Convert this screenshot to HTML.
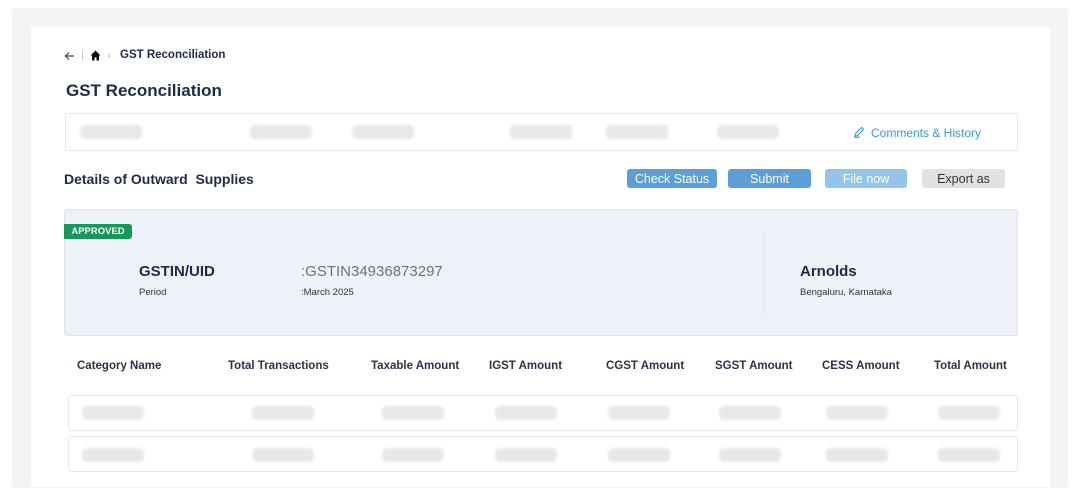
<!DOCTYPE html>
<html><head><meta charset="utf-8"><style>
*{margin:0;padding:0;box-sizing:border-box}
body{width:1080px;height:479px;overflow:hidden;background:#fff;font-family:"Liberation Sans",sans-serif;position:relative;color:#1f2a4a}
.a{position:absolute}
.ph{position:absolute;height:14px;width:62px;background:#e8e8e8;border-radius:5px;filter:blur(1.2px)}
.btn{position:absolute;top:169px;height:19px;border-radius:3px;font-size:12.5px;text-align:center;line-height:20px}
.th{position:absolute;top:360px;font-size:11.5px;font-weight:bold;color:#2d3345}
.row{position:absolute;left:68px;width:950px;height:36px;border:1px solid #e6e8ec;border-radius:3px;background:#fff}
</style></head><body>
<div class="a" style="left:12px;top:8px;width:1056px;height:480px;background:#f4f4f5;border-radius:4px"></div>
<div class="a" style="left:31px;top:27px;width:1019px;height:460px;background:#fff"></div>

<svg class="a" style="left:64px;top:51px" width="11" height="10" viewBox="0 0 11 10"><path d="M10 5H1.5M5 1.5L1.5 5L5 8.5" fill="none" stroke="#444" stroke-width="1.2"/></svg>
<div class="a" style="left:82px;top:50px;width:1px;height:11px;background:#ccc"></div>
<svg class="a" style="left:90px;top:50px" width="11" height="11" viewBox="0 0 11 11"><path d="M5.5 0.5L0.5 5.5H2V10.5H4.5V7.5H6.5V10.5H9V5.5H10.5Z" fill="#111"/></svg>
<div class="a" style="left:107px;top:48px;font-size:12px;color:#bbb">&#8250;</div>
<div class="a" style="left:120px;top:49px;font-size:11.5px;font-weight:bold;color:#1f2a4a">GST Reconciliation</div>
<div class="a" style="left:66px;top:81px;font-size:17px;font-weight:bold;color:#1f2a4a">GST Reconciliation</div>

<div class="a" style="left:65px;top:113px;width:953px;height:38px;border:1px solid #e8e8ea;border-radius:2px"></div>
<div class="ph" style="left:80px;top:125px"></div>
<div class="ph" style="left:250px;top:125px"></div>
<div class="ph" style="left:352px;top:125px"></div>
<div class="ph" style="left:510px;top:125px"></div>
<div class="ph" style="left:606px;top:125px"></div>
<div class="ph" style="left:717px;top:125px"></div>
<svg class="a" style="left:853px;top:126px" width="12" height="12" viewBox="0 0 12 12"><path d="M2 10L2.5 7.5L8.5 1.5L10.5 3.5L4.5 9.5Z M1 11.2H7" fill="none" stroke="#3a9bd5" stroke-width="1.1"/></svg>
<div class="a" style="left:871px;top:126px;font-size:12px;color:#3a9bd5">Comments &amp; History</div>

<div class="a" style="left:64px;top:171px;font-size:14px;font-weight:bold;color:#1f2a4a">Details of Outward&nbsp; Supplies</div>
<div class="btn" style="left:627px;width:90px;background:#5b9ed8;color:#fff">Check Status</div>
<div class="btn" style="left:728px;width:83px;background:#5b9ed8;color:#fff">Submit</div>
<div class="btn" style="left:825px;width:82px;background:#94c4ea;color:#fff">File now</div>
<div class="btn" style="left:922px;width:83px;background:#e2e2e2;color:#333">Export as</div>

<div class="a" style="left:64px;top:209px;width:954px;height:127px;background:#eef1f8;border:1px solid #dfe3ea;border-radius:3px"></div>
<div class="a" style="left:64px;top:224px;width:68px;height:15px;background:#13995a;border-radius:0 3px 3px 0;color:#fff;font-size:9.5px;line-height:15px;text-align:center;font-weight:bold">APPROVED</div>
<div class="a" style="left:764px;top:230px;width:1px;height:85px;background:#dfe3ea"></div>
<div class="a" style="left:139px;top:263px;font-size:15px;font-weight:bold;color:#1f2a4a">GSTIN/UID</div>
<div class="a" style="left:139px;top:287px;font-size:9.5px;color:#333">Period</div>
<div class="a" style="left:301px;top:263px;font-size:15px;color:#6b7280">:GSTIN34936873297</div>
<div class="a" style="left:301px;top:287px;font-size:9.5px;color:#333">:March 2025</div>
<div class="a" style="left:800px;top:263px;font-size:15px;font-weight:bold;color:#1f2a4a">Arnolds</div>
<div class="a" style="left:800px;top:287px;font-size:9.5px;color:#333">Bengaluru, Karnataka</div>

<div class="th" style="left:77px">Category Name</div>
<div class="th" style="left:228px">Total Transactions</div>
<div class="th" style="left:371px">Taxable Amount</div>
<div class="th" style="left:489px">IGST Amount</div>
<div class="th" style="left:606px">CGST Amount</div>
<div class="th" style="left:715px">SGST Amount</div>
<div class="th" style="left:822px">CESS Amount</div>
<div class="th" style="left:934px">Total Amount</div>

<div class="row" style="top:395px"></div>
<div class="row" style="top:436px"></div>
<div class="ph" style="left:82px;top:406px"></div><div class="ph" style="left:252px;top:406px"></div><div class="ph" style="left:382px;top:406px"></div><div class="ph" style="left:495px;top:406px"></div><div class="ph" style="left:608px;top:406px"></div><div class="ph" style="left:719px;top:406px"></div><div class="ph" style="left:826px;top:406px"></div><div class="ph" style="left:938px;top:406px"></div>
<div class="ph" style="left:82px;top:448px"></div><div class="ph" style="left:252px;top:448px"></div><div class="ph" style="left:382px;top:448px"></div><div class="ph" style="left:495px;top:448px"></div><div class="ph" style="left:608px;top:448px"></div><div class="ph" style="left:719px;top:448px"></div><div class="ph" style="left:826px;top:448px"></div><div class="ph" style="left:938px;top:448px"></div>
</body></html>
